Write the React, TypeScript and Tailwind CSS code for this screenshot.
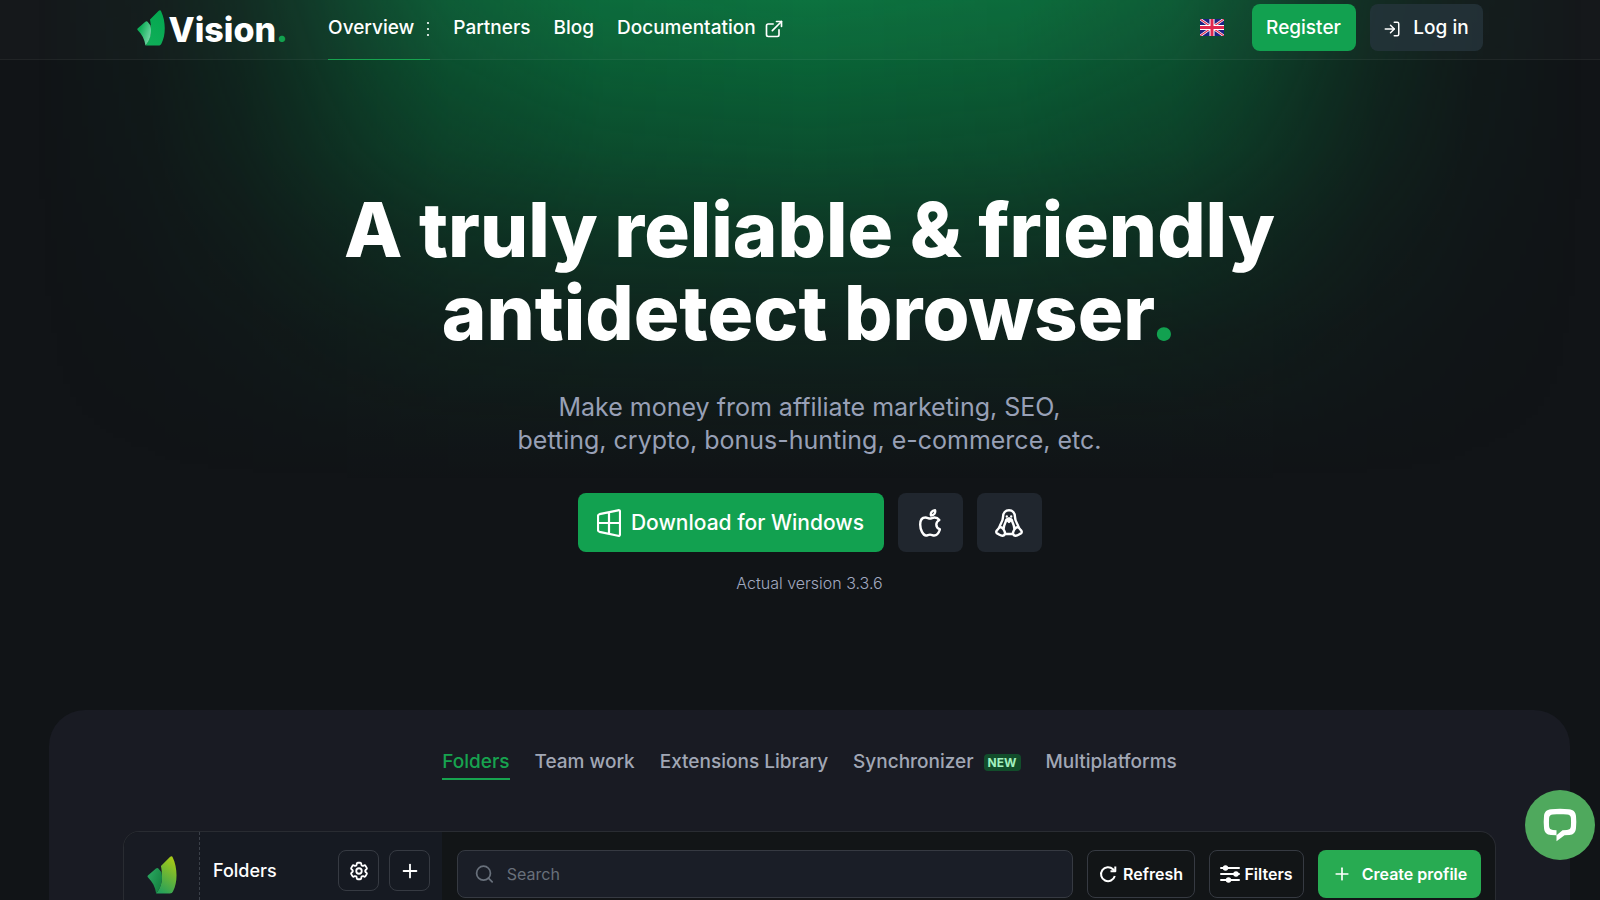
import { useState } from 'react'
import { ExternalLink, LogIn, Plus, Search } from 'lucide-react'
import { HiOutlineCog6Tooth } from 'react-icons/hi2'

const Leaf = ({ id, from, to, shade, className }) => (
  <svg viewBox="0 0 28 36" className={className} aria-hidden="true">
    <defs>
      <linearGradient id={`${id}-main`} x1="0.7" y1="0" x2="0.3" y2="1">
        <stop offset="0" stopColor={from} />
        <stop offset="1" stopColor={to} />
      </linearGradient>
      <linearGradient id={`${id}-side`} x1="0" y1="0.2" x2="1" y2="0.8">
        <stop offset="0.2" stopColor={to} />
        <stop offset="1" stopColor={shade} />
      </linearGradient>
    </defs>
    <path
      d="M13 9.500L21.500 1C22.700 0 23.600 0 24.200 1.400C28.800 11 29 25 24.500 33.500C23.700 35 23 35.500 21.500 35.500H8.500C13 30 15.500 22 13 9.500Z"
      fill={`url(#${id}-main)`}
    />
    <path
      d="M0.600 18.500L8.300 11.800C9.200 11 10.200 11.100 10.800 12L13.500 15.500C15 22 13.500 30 8.500 35.500C7.500 29 5 24.500 0.800 20.300C0.200 19.700 0.100 19 0.600 18.500Z"
      fill={`url(#${id}-side)`}
    />
  </svg>
)

const Flag = () => (
  <svg viewBox="0 0 24 17" className="h-[17px] w-6" aria-hidden="true">
    <path fill="#1c2184" d="M0 0h24v17H0z" />
    <path stroke="#fff" strokeWidth="2.600" d="M0 0l24 17M24 0L0 17" />
    <path stroke="#e0284f" strokeWidth="1.100" d="M0 0l24 17M24 0L0 17" />
    <path stroke="#fff" strokeWidth="5" d="M12 0v17M0 8.500h24" />
    <path stroke="#e0284f" strokeWidth="3" d="M12 0v17M0 8.500h24" />
  </svg>
)

const Windows = () => (
  <svg
    viewBox="0 0 24 28"
    className="h-7 w-6"
    fill="none"
    stroke="currentColor"
    strokeWidth="2.200"
    strokeLinejoin="round"
    aria-hidden="true"
  >
    <path d="M2.500 5.200L21 1.300C22.300 1 23 1.600 23 2.800V25.200C23 26.400 22.300 27 21 26.700L2.500 22.800C1.400 22.500 1 22 1 21V7C1 6 1.400 5.500 2.500 5.200ZM1 14H23M12 3.500V24.500" />
  </svg>
)

const Apple = () => (
  <svg
    viewBox="0 0 22 28"
    className="h-7 w-[22px]"
    fill="none"
    stroke="currentColor"
    strokeWidth="2.400"
    strokeLinejoin="round"
    aria-hidden="true"
  >
    <path d="M6.500 8.500C3 8.500 1.200 11.500 1.200 15.500C1.200 20.500 4 26.500 7 26.500C8.600 26.500 9.200 25.600 11 25.600C12.800 25.600 13.500 26.500 15.200 26.500C17.600 26.500 20 23.500 21 20.300C18.500 19.400 17.300 17.800 17.300 15.500C17.300 13.400 18.600 12 20.300 11C19 9.200 17.300 8.500 15.500 8.500C13.700 8.500 12.500 9.500 11 9.500C9.500 9.500 8.300 8.500 6.500 8.500Z" />
    <path d="M12 6.500C11.200 3.800 13 1.400 16 1.200C16.800 4 15 6.400 12 6.500Z" />
  </svg>
)

const Tux = () => (
  <svg
    viewBox="0 0 28 28"
    className="size-7"
    fill="none"
    stroke="currentColor"
    strokeWidth="2.400"
    strokeLinejoin="round"
    strokeLinecap="round"
    aria-hidden="true"
  >
    <path d="M4.500 18C5.500 14 8 12.500 8 8C8 3.800 10.500 1.200 14 1.200C17.500 1.200 20 3.800 20 8C20 12.500 22.500 14 23.500 18" />
    <path d="M5 18.300C3.800 18.400 3.500 19.800 2.500 20.700C0.900 22 0.700 23.800 2.400 24.700C4.200 25.500 5.800 26.900 7.500 26.700C9.600 26.500 10.500 24.600 9.700 22.700C8.900 20.700 6.900 18 5 18.300Z" />
    <path d="M23 18.300C24.200 18.400 24.500 19.800 25.500 20.700C27.100 22 27.300 23.800 25.600 24.700C23.800 25.500 22.200 26.900 20.500 26.700C18.400 26.500 17.500 24.600 18.300 22.700C19.100 20.700 21.100 18 23 18.300Z" />
    <path d="M8.800 19C8.900 15.500 10.600 14.300 11 11.500M19.200 19C19.100 15.500 17.400 14.300 17 11.500M10.500 25h7" />
    <path d="M11.500 10.500L14 9.200L16.500 10.500L14 13Z" fill="currentColor" />
    <path d="M11.800 7.500v.1M16.200 7.500v.1" />
  </svg>
)

const Refresh = () => (
  <svg
    viewBox="0 0 18 18"
    className="size-[18px]"
    fill="none"
    stroke="currentColor"
    strokeWidth="2"
    aria-hidden="true"
  >
    <path d="M15.800 11A7 7 0 1 1 14 4.200L15.500 5.700" />
    <path d="M16.300 1.500V6.300H11.500" strokeLinejoin="round" />
  </svg>
)

const Filters = () => (
  <svg viewBox="0 0 20 18" className="h-[18px] w-5" aria-hidden="true">
    <path
      d="M1 3h18M1 9h18M1 15h18"
      stroke="currentColor"
      strokeWidth="2"
      strokeLinecap="round"
    />
    <circle cx="5.500" cy="3" r="2.700" fill="currentColor" />
    <circle cx="16" cy="9" r="2.700" fill="currentColor" />
    <circle cx="8.500" cy="15" r="2.700" fill="currentColor" />
  </svg>
)

const ChatBubble = () => (
  <svg viewBox="0 0 34 34" className="size-[34px]" aria-hidden="true">
    <path
      fill="#fff"
      fillRule="evenodd"
      d="M8 1.300C14 0.600 20 0.600 26 1.300C30.500 1.900 32.600 4 33 8C33.400 12 33.400 16 33 20C32.600 24.500 30.500 26.700 26.500 27L21.500 27.300L13.500 33.300V27.300L8 27C3.500 26.700 1.400 24.500 1 20C0.600 16 0.600 12 1 8C1.400 4 3.500 1.900 8 1.300ZM10 6.500C7.500 6.700 6.300 7.800 6.100 10C5.900 13 5.900 15.500 6.100 18.200C6.300 20.500 7.500 21.700 10 21.900L13.500 22.200V27.300L19.500 22.300L24 21.900C26.500 21.700 27.700 20.500 27.900 18.200C28.100 15.500 28.100 13 27.900 10C27.700 7.800 26.500 6.700 24 6.500C19 6.100 15 6.100 10 6.500Z"
    />
  </svg>
)

const tabs = [
  { label: 'Folders' },
  { label: 'Team work' },
  { label: 'Extensions Library' },
  { label: 'Synchronizer', isNew: true },
  { label: 'Multiplatforms' },
]

const Header = () => (
  <header className="border-b border-white/5 bg-white/[0.02] pl-[19px]">
    <div className="mx-auto flex h-[59px] max-w-[1346px] items-center">
      <a href="#" className="flex items-center gap-1 pb-1" aria-label="Vision">
        <Leaf
          id="brand"
          from="#04a850"
          to="#0fae58"
          shade="#7fdcae"
          className="h-9 w-7"
        />
        <span className="pt-1 text-[34px] leading-9 font-extrabold">
          Vision<span className="text-[#12a150]">.</span>
        </span>
      </a>
      <nav className="ml-10 flex h-full items-center gap-[23px] text-[19px] font-medium">
        <a
          href="#"
          className="-mb-px flex h-[60px] items-center gap-3 border-b border-[#17a34f] pb-0.5"
        >
          Overview
          <svg viewBox="0 0 4 16" className="h-4 w-1" fill="currentColor">
            <circle cx="2" cy="2" r="1.100" />
            <circle cx="2" cy="8" r="1.100" />
            <circle cx="2" cy="14" r="1.100" />
          </svg>
        </a>
        <a href="#" className="pb-0.5">
          Partners
        </a>
        <a href="#" className="pb-0.5">
          Blog
        </a>
        <a href="#" className="flex items-center gap-2 pb-0.5">
          Documentation
          <ExternalLink size={20} strokeWidth={2} />
        </a>
      </nav>
      <div className="ml-auto flex items-center pb-1 text-[19px] font-medium">
        <button type="button" aria-label="Language" className="mr-7">
          <Flag />
        </button>
        <button
          type="button"
          className="mr-3.5 h-[47px] w-[104px] rounded-lg bg-[#12a150] pt-0.5"
        >
          Register
        </button>
        <button
          type="button"
          className="flex h-[47px] w-[113px] items-center justify-center gap-3 rounded-lg bg-[#26353c]/80 pt-0.5"
        >
          <LogIn size={18} />
          Log in
        </button>
      </div>
    </div>
  </header>
)

const Hero = () => (
  <section className="flex flex-col items-center pt-32 pl-[19px] text-center">
    <h1 className="text-[76px] leading-[83px] font-extrabold">
      A truly reliable &amp; friendly
      <br />
      antidetect browser<span className="text-[#12a150]">.</span>
    </h1>
    <p className="mt-[37px] text-[25px] leading-[33px] text-[#98a0b6]">
      Make money from affiliate marketing, SEO,
      <br />
      betting, crypto, bonus-hunting, e-commerce, etc.
    </p>
    <div className="mt-9 flex gap-3.5">
      <button
        type="button"
        className="flex h-[59px] w-[306px] items-center justify-center gap-2.5 rounded-lg bg-[#12a150] text-[21px] font-medium"
      >
        <Windows />
        Download for Windows
      </button>
      <button
        type="button"
        aria-label="Download for macOS"
        className="flex h-[59px] w-[65px] items-center justify-center rounded-lg bg-[#20262e]"
      >
        <Apple />
      </button>
      <button
        type="button"
        aria-label="Download for Linux"
        className="flex h-[59px] w-[65px] items-center justify-center rounded-lg bg-[#20262e]"
      >
        <Tux />
      </button>
    </div>
    <p className="mt-[19px] text-base font-light text-[#a1a9c0]">
      Actual version 3.3.6
    </p>
  </section>
)

const Showcase = () => {
  const [active, setActive] = useState('Folders')

  return (
    <section className="mt-[115px] mr-[30px] ml-[49px] flex flex-1 flex-col rounded-t-[36px] bg-[#191b23] px-[74px] pt-9">
      <div
        role="tablist"
        className="flex justify-center gap-[25px] text-[19px] font-medium"
      >
        {tabs.map(({ label, isNew }) => (
          <button
            key={label}
            type="button"
            role="tab"
            aria-selected={active === label}
            onClick={() => setActive(label)}
            className={
              active === label
                ? 'flex h-[34px] items-center border-b-2 border-[#17a34f] text-[#17a34f]'
                : 'flex h-[34px] items-center border-b-2 border-transparent text-[#a1a7b5]'
            }
          >
            {label}
            {isNew && (
              <span className="ml-2.5 rounded bg-[#124d2b] px-1 text-xs leading-[17px] font-bold text-[#a2f0bf]">
                NEW
              </span>
            )}
          </button>
        ))}
      </div>

      <div className="mt-[51px] flex flex-1 overflow-hidden rounded-t-2xl border border-b-0 border-[#292c32] bg-[#121517]">
        <div className="flex w-[76px] justify-center border-r border-dashed border-[#3b4049] bg-[#181b23] pt-6">
          <Leaf
            id="app"
            from="#a8c916"
            to="#26a05a"
            shade="#14803f"
            className="h-[38px] w-[30px]"
          />
        </div>
        <div className="flex w-[242px] items-start gap-2.5 bg-[#161a22] pt-[18px] pr-3 pl-[13px]">
          <h2 className="mr-auto text-lg leading-[41px] font-medium">Folders</h2>
          <button
            type="button"
            aria-label="Settings"
            className="flex size-[41px] items-center justify-center rounded-lg border border-[#363a42]"
          >
            <HiOutlineCog6Tooth size={22} strokeWidth={2} />
          </button>
          <button
            type="button"
            aria-label="Add folder"
            className="flex size-[41px] items-center justify-center rounded-lg border border-[#363a42]"
          >
            <Plus size={22} strokeWidth={2} />
          </button>
        </div>
        <div className="flex flex-1 items-start gap-3.5 pt-[18px] pr-3.5 pl-[15px] text-base font-semibold">
          <label className="flex h-12 flex-1 items-center gap-3 rounded-lg border border-[#363a42] bg-[#1a1e27] px-4 text-[#68707b]">
            <Search size={22} />
            <input
              type="text"
              aria-label="Search"
              placeholder="Search"
              className="w-full bg-transparent font-normal outline-none placeholder:text-[#68707b]"
            />
          </label>
          <button
            type="button"
            className="flex h-12 w-[108px] items-center justify-center gap-1.5 rounded-lg border border-[#363a42]"
          >
            <Refresh />
            Refresh
          </button>
          <button
            type="button"
            className="flex h-12 w-[95px] items-center justify-center gap-1 rounded-lg border border-[#363a42]"
          >
            <Filters />
            Filters
          </button>
          <button
            type="button"
            className="flex h-12 w-[163px] items-center justify-center gap-2.5 rounded-lg bg-[#28ab52]"
          >
            <Plus size={20} />
            Create profile
          </button>
        </div>
      </div>
    </section>
  )
}

export default function App() {
  return (
    <div className="relative isolate flex min-h-screen flex-col bg-[#111417] font-['Inter',sans-serif] text-white">
      {/* green glow behind the header and the hero */}
      <div className="absolute top-0 right-0 left-5 -z-10 h-[480px] bg-[linear-gradient(to_bottom,#08703c_0%,#08703cde_12%,#08703ca8_31%,#08703c66_48%,#08703c2b_69%,#08703c0d_88%,#08703c00_100%)] mask-[linear-gradient(to_right,#0000_1%,#00000012_8%,#00000038_14%,#00000061_18%,#00000099_23%,#000000bf_27%,#000000ed_37%,#000_50%,#000000ed_63%,#000000bf_73%,#00000099_77%,#00000061_82%,#00000038_86%,#00000012_92%,#0000_99%)]" />
      <Header />
      <Hero />
      <Showcase />
      <button
        type="button"
        aria-label="Open chat"
        className="fixed right-[5px] bottom-10 flex size-[70px] items-center justify-center rounded-full bg-[#4fa95d]"
      >
        <ChatBubble />
      </button>
    </div>
  )
}
